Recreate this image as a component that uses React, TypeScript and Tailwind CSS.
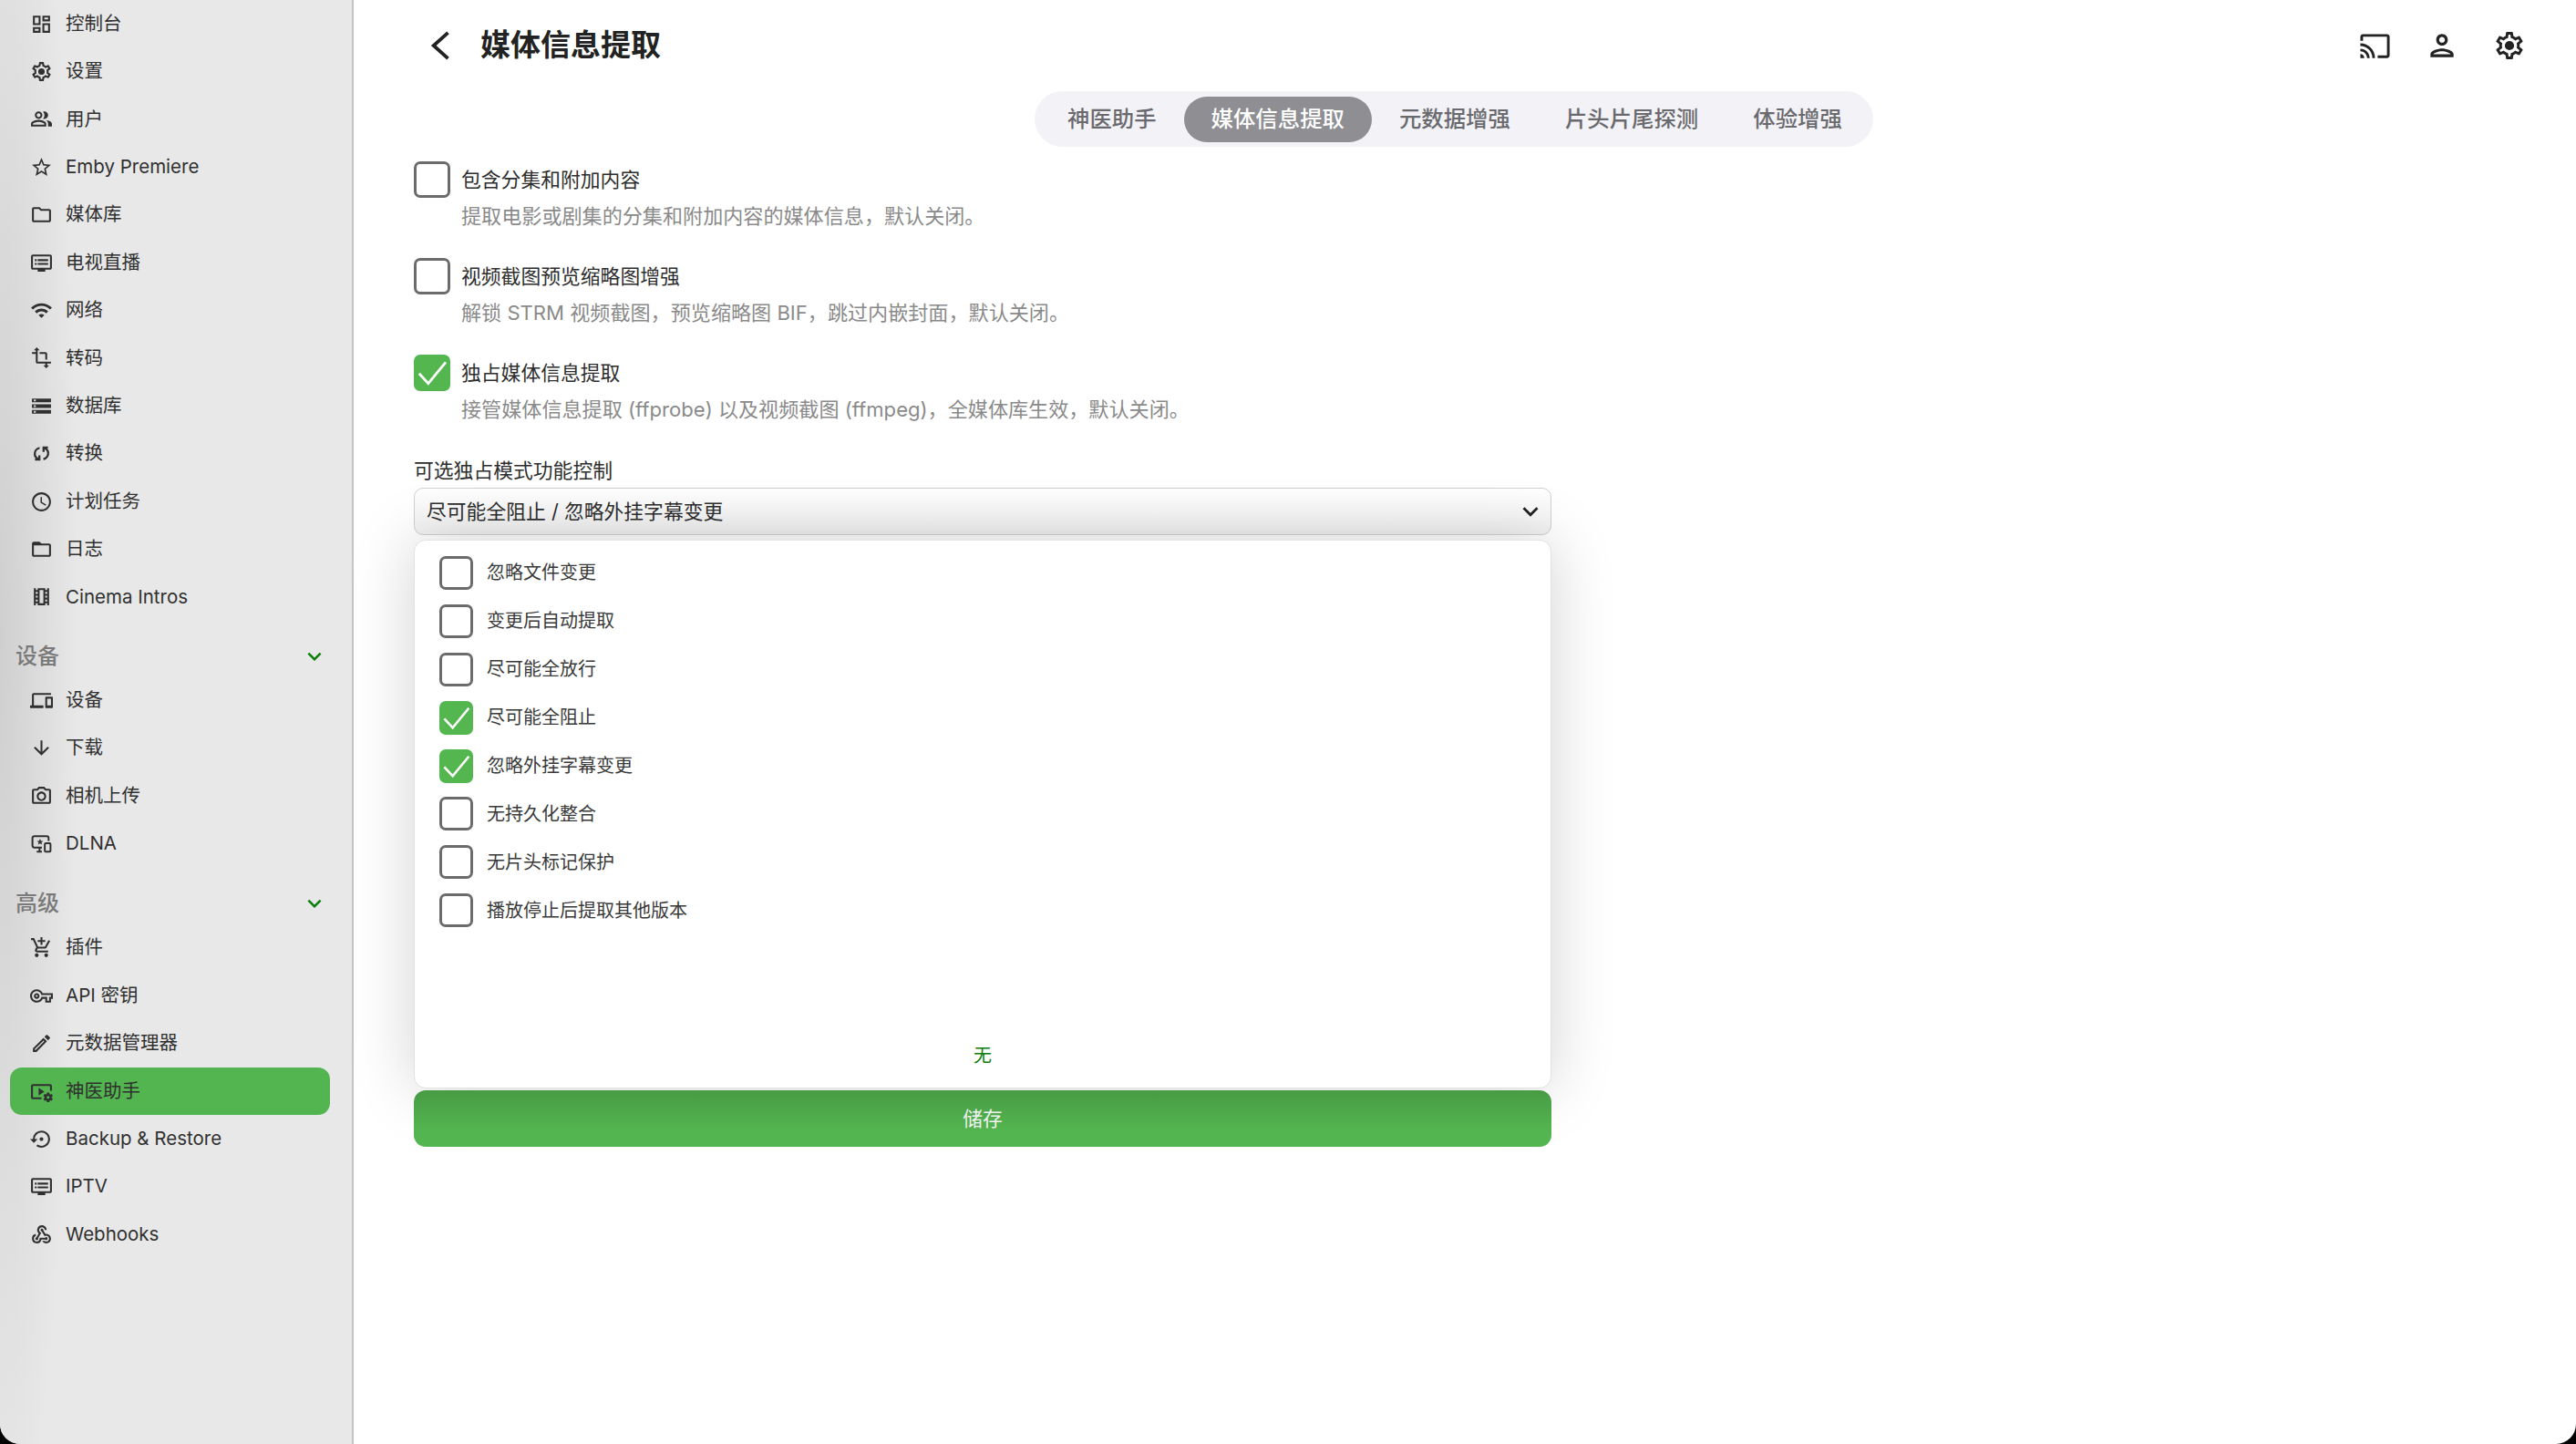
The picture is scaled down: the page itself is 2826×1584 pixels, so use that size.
import type { ReactNode } from 'react';
import {
  MdArrowDownward,
  MdKeyboardArrowDown,
  MdOutlineAddShoppingCart,
  MdOutlineCast,
  MdOutlineDashboard,
  MdOutlineDevices,
  MdOutlineDvr,
  MdOutlineEdit,
  MdOutlineFolder,
  MdOutlineFolderOpen,
  MdOutlinePeopleAlt,
  MdOutlinePerson,
  MdOutlinePhotoCamera,
  MdOutlineSchedule,
  MdOutlineStarBorder,
  MdOutlineTheaters,
  MdOutlineTransform,
  MdOutlineVideoSettings,
  MdOutlineVpnKey,
  MdOutlineWebhook,
  MdSettingsBackupRestore,
  MdStorage,
  MdWifi,
} from 'react-icons/md';

const FONT_STACK = 'font-["Inter","Noto_Sans_CJK_SC",sans-serif]';

const GEAR_PATH =
  'M19.43 12.98c.04-.32.07-.64.07-.98 0-.34-.03-.66-.07-.98l2.11-1.65c.19-.15.24-.42.12-.64l-2-3.46c-.09-.16-.26-.25-.44-.25-.06 0-.12.01-.17.03l-2.49 1c-.52-.4-1.08-.73-1.69-.98l-.38-2.65C14.46 2.18 14.25 2 14 2h-4c-.25 0-.46.18-.49.42l-.38 2.65c-.61.25-1.17.59-1.69.98l-2.49-1c-.06-.02-.12-.03-.18-.03-.17 0-.34.09-.43.25l-2 3.46c-.13.22-.07.49.12.64l2.11 1.65c-.04.32-.07.65-.07.98 0 .33.03.66.07.98l-2.11 1.65c-.19.15-.24.42-.12.64l2 3.46c.09.16.26.25.44.25.06 0 .12-.01.17-.03l2.49-1c.52.4 1.08.73 1.69.98l.38 2.65c.03.24.24.42.49.42h4c.25 0 .46-.18.49-.42l.38-2.65c.61-.25 1.17-.59 1.69-.98l2.49 1c.06.02.12.03.18.03.17 0 .34-.09.43-.25l2-3.46c.12-.22.07-.49-.12-.64l-2.11-1.65zm-1.98-1.71c.04.31.05.52.05.73 0 .21-.02.43-.05.73l-.14 1.13.89.7 1.08.84-.7 1.21-1.27-.51-1.04-.42-.9.68c-.43.32-.84.56-1.25.73l-1.06.43-.16 1.13-.2 1.35h-1.4l-.19-1.35-.16-1.13-1.06-.43c-.43-.18-.83-.41-1.23-.71l-.91-.7-1.06.43-1.27.51-.7-1.21 1.08-.84.89-.7-.14-1.13c-.03-.31-.05-.54-.05-.74s.02-.43.05-.73l.14-1.13-.89-.7-1.08-.84.7-1.21 1.27.51 1.04.42.9-.68c.43-.32.84-.56 1.25-.73l1.06-.43.16-1.13.2-1.35h1.39l.19 1.35.16 1.13 1.06.43c.43.18.83.41 1.23.71l.91.7 1.06-.43 1.27-.51.7 1.21-1.07.85-.89.7.14 1.13z';

function GearIcon({ size = 25 }: { size?: number }) {
  return (
    <svg width={size} height={size} viewBox="0 0 24 24" fill="currentColor">
      <path d={GEAR_PATH} />
      <circle cx="12" cy="12" r="3.4" />
    </svg>
  );
}

function ConvertIcon({ size = 25 }: { size?: number }) {
  return (
    <svg width={size} height={size} viewBox="0 0 24 24" fill="none" stroke="currentColor" strokeWidth="2.2">
      <path d="M10 6C6.5 7 4.5 10 5 13.5c.3 2 2 3.5 4 4.5" />
      <path d="M9.8 13.8v4.6H5.2" />
      <path d="M14 18c3.5-1 5.5-4 5-7.5-.3-2-2-3.5-4-4.5" />
      <path d="M14.2 10.2V5.6h4.6" />
    </svg>
  );
}

function DlnaIcon({ size = 25 }: { size?: number }) {
  return (
    <svg width={size} height={size} viewBox="0 0 24 24" fill="none" stroke="currentColor" strokeWidth="1.9">
      <path d="M12.5 16H4.5a2 2 0 0 1-2-2V6a2 2 0 0 1 2-2h13a2 2 0 0 1 2 2v3" />
      <path d="M10 16v4M7 20.5h5.5" />
      <path d="M10.5 6.8l1 2.2 2.3.2-1.8 1.5.6 2.3-2.1-1.2-2.1 1.2.6-2.3-1.8-1.5 2.3-.2z" fill="currentColor" stroke="none" />
      <rect x="15.5" y="11.5" width="6" height="9" rx="1" />
    </svg>
  );
}

type NavItem = { label: string; icon: ReactNode; active?: boolean };

const MAIN_ITEMS: NavItem[] = [
  { label: '控制台', icon: <MdOutlineDashboard size={25} /> },
  { label: '设置', icon: <GearIcon /> },
  { label: '用户', icon: <MdOutlinePeopleAlt size={25} /> },
  { label: 'Emby Premiere', icon: <MdOutlineStarBorder size={25} /> },
  { label: '媒体库', icon: <MdOutlineFolder size={25} /> },
  { label: '电视直播', icon: <MdOutlineDvr size={25} /> },
  { label: '网络', icon: <MdWifi size={25} /> },
  { label: '转码', icon: <MdOutlineTransform size={25} /> },
  { label: '数据库', icon: <MdStorage size={25} /> },
  { label: '转换', icon: <ConvertIcon /> },
  { label: '计划任务', icon: <MdOutlineSchedule size={25} /> },
  { label: '日志', icon: <MdOutlineFolderOpen size={25} /> },
  { label: 'Cinema Intros', icon: <MdOutlineTheaters size={25} /> },
];

const DEVICE_ITEMS: NavItem[] = [
  { label: '设备', icon: <MdOutlineDevices size={25} /> },
  { label: '下载', icon: <MdArrowDownward size={25} /> },
  { label: '相机上传', icon: <MdOutlinePhotoCamera size={25} /> },
  { label: 'DLNA', icon: <DlnaIcon /> },
];

const ADVANCED_ITEMS: NavItem[] = [
  { label: '插件', icon: <MdOutlineAddShoppingCart size={25} /> },
  { label: 'API 密钥', icon: <MdOutlineVpnKey size={25} /> },
  { label: '元数据管理器', icon: <MdOutlineEdit size={25} /> },
  { label: '神医助手', icon: <MdOutlineVideoSettings size={25} />, active: true },
  { label: 'Backup & Restore', icon: <MdSettingsBackupRestore size={25} /> },
  { label: 'IPTV', icon: <MdOutlineDvr size={25} /> },
  { label: 'Webhooks', icon: <MdOutlineWebhook size={25} /> },
];

const TABS = ['神医助手', '媒体信息提取', '元数据增强', '片头片尾探测', '体验增强'];

const OPTIONS = [
  { label: '包含分集和附加内容', hint: '提取电影或剧集的分集和附加内容的媒体信息，默认关闭。', checked: false },
  { label: '视频截图预览缩略图增强', hint: '解锁 STRM 视频截图，预览缩略图 BIF，跳过内嵌封面，默认关闭。', checked: false },
  { label: '独占媒体信息提取', hint: '接管媒体信息提取 (ffprobe) 以及视频截图 (ffmpeg)，全媒体库生效，默认关闭。', checked: true },
];

const MODES = [
  { label: '忽略文件变更', checked: false },
  { label: '变更后自动提取', checked: false },
  { label: '尽可能全放行', checked: false },
  { label: '尽可能全阻止', checked: true },
  { label: '忽略外挂字幕变更', checked: true },
  { label: '无持久化整合', checked: false },
  { label: '无片头标记保护', checked: false },
  { label: '播放停止后提取其他版本', checked: false },
];

function Checkbox({ checked, large }: { checked: boolean; large?: boolean }) {
  const size = large ? 'w-[40px] h-[40px]' : 'w-[37px] h-[37px]';
  if (checked) {
    return (
      <span className={`${size} shrink-0 rounded-[7px] bg-[#53b64f] flex items-center justify-center`}>
        <svg width="100%" height="100%" viewBox="0 0 24 24" fill="none" stroke="#fff" strokeWidth="1.7">
          <path d="M3.5 12.5l6 6.5L21 5" />
        </svg>
      </span>
    );
  }
  return <span className={`${size} shrink-0 rounded-[7px] border-[3px] border-[#6b6b6b]`} />;
}

function NavRow({ item }: { item: NavItem }) {
  return (
    <div
      className={`ml-[11px] mr-[24px] h-[52.4px] pl-[22px] flex items-center gap-[14px] text-[20.5px] text-[#303030] ${
        item.active ? 'bg-[#53b54f] rounded-[13px]' : ''
      }`}
    >
      {item.icon}
      <span>{item.label}</span>
    </div>
  );
}

function NavHeading({ label, short }: { label: string; short?: boolean }) {
  return (
    <div className={`${short ? 'h-[61px]' : 'h-[62px]'} pt-[16px] pl-[17px] pr-[26px] flex items-center justify-between`}>
      <span className="text-[24px] leading-[46px] font-medium text-[#7a7a7a]">{label}</span>
      <MdKeyboardArrowDown size={30} className="text-[#0a7d0a]" />
    </div>
  );
}

function Sidebar() {
  return (
    <aside className="w-[388px] shrink-0 border-r-2 border-[#c4c4c4] bg-[radial-gradient(ellipse_85px_1050px_at_0_700px,#cfcfcf,#e8e8e8)]">
      {MAIN_ITEMS.map((item) => (
        <NavRow key={item.label} item={item} />
      ))}
      <NavHeading label="设备" short />
      {DEVICE_ITEMS.map((item) => (
        <NavRow key={item.label} item={item} />
      ))}
      <NavHeading label="高级" />
      {ADVANCED_ITEMS.map((item) => (
        <NavRow key={item.label} item={item} />
      ))}
    </aside>
  );
}

export default function App() {
  return (
    <div className={`w-[2826px] h-[1584px] bg-black overflow-hidden ${FONT_STACK}`}>
      <div className="h-full bg-white rounded-b-[22px] overflow-hidden flex">
        <Sidebar />

        <main className="flex-1 min-w-0">
          {/* Top bar */}
          <header className="h-[100px] pl-[76px] pr-[55px] flex items-center text-[#222]">
            <svg width="40" height="40" viewBox="0 0 24 24" fill="none" stroke="currentColor" strokeWidth="2.3">
              <path d="M16.5 3.5L7 12l9.5 8.5" />
            </svg>
            <h1 className="ml-[23px] text-[33px] font-semibold">媒体信息提取</h1>
            <div className="ml-auto flex items-center gap-[37px]">
              <MdOutlineCast size={35} />
              <MdOutlinePerson size={38} />
              <GearIcon size={36} />
            </div>
          </header>

          {/* Tabs */}
          <nav className="ml-[747px] w-[920px] h-[61px] pl-[6px] flex items-center rounded-full bg-[#f2f2f7]">
            {TABS.map((tab, i) => (
              <span
                key={tab}
                className={`h-[50px] px-[30px] flex items-center rounded-full text-[24.4px] font-medium ${
                  i === 1 ? 'bg-[#8e8e93] text-white' : 'text-[#6a6a6e]'
                }`}
              >
                {tab}
              </span>
            ))}
          </nav>

          {/* Form */}
          <section className="ml-[66px] mt-[16px] w-[1248px]">
            {OPTIONS.map((opt) => (
              <div key={opt.label} className="h-[106px]">
                <div className="flex items-center gap-[12px] h-[40px]">
                  <Checkbox checked={opt.checked} large />
                  <span className="text-[21.8px] text-[#2e2e2e]">{opt.label}</span>
                </div>
                <p className="ml-[52px] mt-[3.5px] text-[22.1px] leading-[32px] text-[#8a8a8a]">{opt.hint}</p>
              </div>
            ))}

            <label className="h-[40px] pt-[2px] flex items-center text-[21.8px] text-[#2e2e2e]">可选独占模式功能控制</label>
            <div className="h-[52px] pl-[13px] pr-[5px] flex items-center justify-between rounded-[10px] border border-[#d0d0d0] bg-[linear-gradient(180deg,#ffffff,#f1f1f1)] text-[21.8px] text-[#2e2e2e]">
              <span>尽可能全阻止 / 忽略外挂字幕变更</span>
              <MdKeyboardArrowDown size={34} className="text-[#222]" />
            </div>

            {/* Open dropdown */}
            <div className="relative mt-[5px] h-[602px] pt-[9px] pl-[27px] flex flex-col rounded-[13px] border border-[#e2e2e2] bg-white shadow-[0_0_70px_rgba(0,0,0,0.18)]">
              {MODES.map((mode) => (
                <div key={mode.label} className="h-[52.9px] shrink-0 flex items-center gap-[15px]">
                  <Checkbox checked={mode.checked} />
                  <span className="text-[20px] text-[#3a3a3a]">{mode.label}</span>
                </div>
              ))}
              <div className="mt-auto mb-[15px] -ml-[27px] h-[40px] flex items-center justify-center text-[20px] text-[#0a7d0a]">
                无
              </div>
            </div>

            <button className="relative mt-[2px] w-full h-[62px] rounded-[13px] bg-[linear-gradient(180deg,#489b44,#53b54f_70%)] text-[21.8px] text-[#f0f0f0]">
              储存
            </button>
          </section>
        </main>
      </div>
    </div>
  );
}
